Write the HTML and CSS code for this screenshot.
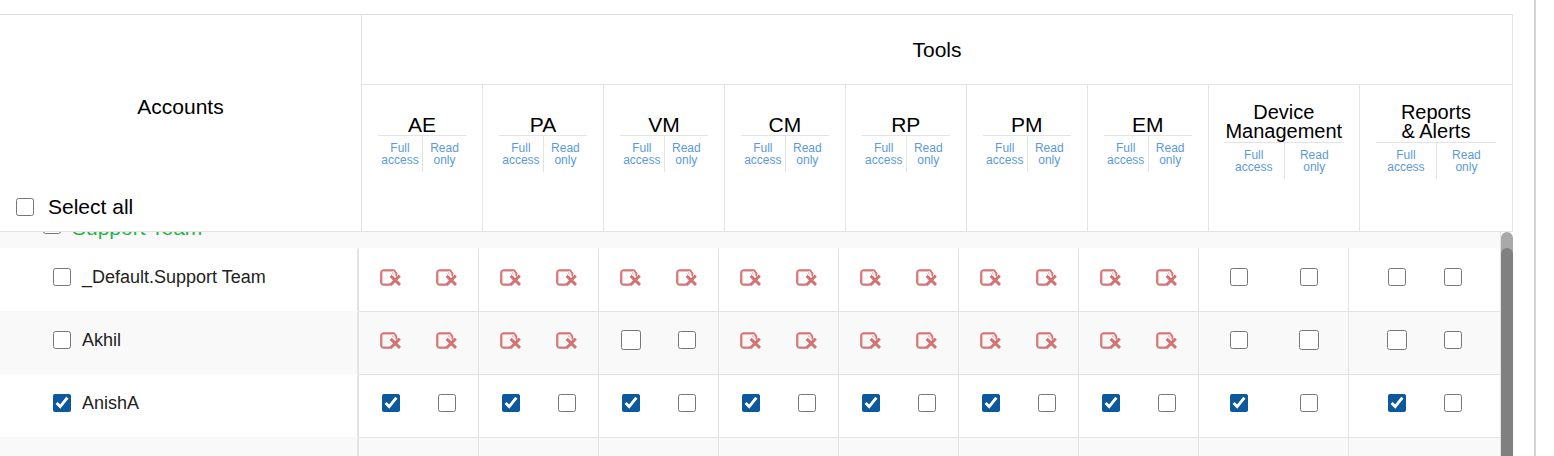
FILE: index.html
```html
<!doctype html>
<html lang="en">
  <head>
    <meta charset="utf-8">
    <title>Account permissions</title>
    <link rel="stylesheet" href="styles.css">
  </head>

  <body>
    <svg class="sprite" aria-hidden="true">
      <symbol id="denied" viewBox="0 0 21 17">
        <path class="deniedFold" d="M2.5 14V4.2Q2.5 2.5 4.2 2.5H12.5V5H15.5M2.5 14.5H10"/>
        <path class="deniedBox" d="M16.4 7.5V4.4L14 1.1H4A3 3 0 0 0 1 4.1v8.8a3 3 0 0 0 3 3H10.5"/>
        <path class="deniedCross" d="M10.6 6.8L20 15.8M19.8 6.6L10.4 16"/>
      </symbol>
    </svg>

    <main id="mainContainer">
      <table class="headTable">
        <colgroup>
          <col class="colAccounts">
          <col class="colTool" span="7">
          <col class="colDevice">
          <col>
        </colgroup>
        <thead>
          <tr class="toolsRow">
            <th class="accountsHead" rowspan="2">
              <div class="accountsTitle">Accounts</div>
              <label class="selectAll"><input type="checkbox"> Select all</label>
            </th>
            <th colspan="9">Tools</th>
          </tr>
          <tr id="toolHeads" class="namesRow"></tr>
        </thead>
      </table>

      <div class="scroller">
        <div class="rows">
          <table class="bodyTable">
            <colgroup>
              <col class="colAccounts">
              <col class="colTool" span="7">
              <col class="colDevice">
              <col>
            </colgroup>
            <tbody id="accountRows">
              <tr class="groupRow">
                <td colspan="10"><label class="account"><input type="checkbox"> Support Team</label></td>
              </tr>
            </tbody>
          </table>
        </div>
        <div class="track"><div class="thumb"></div></div>
      </div>
    </main>

    <script src="script.js"></script>
  </body>
</html>
```

FILE: styles.css
```css
body {
  margin:0;
  background-color:#fff;
  font-family:"Liberation Sans", Arial, sans-serif;
  color:#000;
}

.sprite {
  display:none;
}

#mainContainer {
  display:flex;
  flex-direction:column;
  box-sizing:border-box;
  height:100vh;
  margin-right:18px;
  padding-top:14px;
  padding-right:21px;
  border-right:2px solid #d4d4d4;
}

table {
  width:100%;
  table-layout:fixed;
  border-collapse:separate;
  border-spacing:0;
}

th, td {
  box-sizing:border-box;
  padding:0;
  font-weight:normal;
}

input {
  flex:none;
  width:18px;
  height:18px;
  margin:0;
  accent-color:#0b589f;
}

input.large {
  width:20px;
  height:20px;
}

/* header */

.headTable {
  flex:none;
  border-top:1px solid #ddd;
  border-right:1px solid #e3e3e3;
  font-size:21px;
  line-height:24px;
}

.headTable .colAccounts {
  width:361px;
}

.colTool {
  width:8%;
}

.colDevice {
  width:10%;
}

.headTable th {
  border-bottom:1px solid #e3e3e3;
  border-left:1px solid #e3e3e3;
}

.headTable .accountsHead {
  padding-bottom:12px;
  border-left:0;
  vertical-align:bottom;
}

.toolsRow {
  height:70px;
}

.namesRow {
  height:147px;
}

.headTable .namesRow th {
  padding-bottom:30px;
}

.headTable .namesRow .wide {
  padding-bottom:34px;
}

.selectAll {
  display:flex;
  align-items:center;
  gap:14px;
  margin-top:76px;
  padding-left:16px;
}

.toolName {
  padding-bottom:1px;
  line-height:19px;
}

.wide .toolName {
  font-size:20px;
}

.access {
  display:grid;
  grid-template-columns:1fr 1fr;
  width:88px;
  margin:0 auto;
  border-top:1px solid #e3e3e3;
}

.wide .access {
  width:120px;
}

.access a {
  padding:6px 2px;
  font-size:12px;
  line-height:12px;
  color:#5c9ad9;
  text-decoration:none;
}

.access a + a {
  border-left:1px solid #e3e3e3;
}

/* account rows */

.scroller {
  display:flex;
  flex:1;
  min-height:0;
  overflow:hidden;
}

.rows {
  flex:1;
  border-right:1px solid #e3e3e3;
}

.bodyTable {
  margin-top:-33px;
  font-size:18px;
  line-height:20px;
  color:#222;
}

.bodyTable .colAccounts {
  width:359px;
}

.bodyTable tr {
  height:63px;
}

.bodyTable tr:nth-child(odd) {
  background-color:#f9f9f9;
}

.bodyTable .groupRow {
  height:49px;
  font-size:21px;
  line-height:24px;
  color:#1fb544;
}

.bodyTable td {
  padding-bottom:7px;
  border-top:1px solid #e3e3e3;
  border-right:1px solid #e3e3e3;
}

.bodyTable td:first-child {
  border-top-color:transparent;
  border-right-width:2px;
}

.bodyTable .groupRow td {
  padding-top:8px;
  padding-bottom:0;
  border:0;
}

.bodyTable .groupRow + tr td {
  border-top-color:transparent;
}

.bodyTable td:last-child {
  border-right:0;
}

.account {
  display:flex;
  align-items:center;
  gap:11px;
  padding-left:53px;
}

.groupRow .account {
  align-items:flex-start;
  padding-left:43px;
}

.choices {
  display:grid;
  grid-template-columns:56px 56px;
  justify-content:center;
  align-items:center;
  justify-items:center;
}

.choices.device {
  grid-template-columns:70px 70px;
}

.denied {
  width:21px;
  height:17px;
  margin-top:2px;
}

.deniedBox, .deniedFold, .deniedCross {
  fill:none;
  stroke:#d47373;
}

.deniedBox {
  stroke-width:1.8;
}

.deniedFold {
  stroke:#ecc0c0;
  stroke-width:1;
}

.deniedCross {
  stroke-width:3;
}

.track {
  flex:none;
  width:12px;
  padding-top:16px;
  border-radius:6px 6px 0 0;
  background-color:#a9a9a9;
}

.thumb {
  height:100%;
  border-radius:6px 6px 0 0;
  background-color:#808080;
}
```

FILE: script.js
```js
var tools = ["AE", "PA", "VM", "CM", "RP", "PM", "EM", "Device<br>Management", "Reports<br>&amp; Alerts"];

// two letters per tool, full access then read only
// x = denied, o = unchecked, O = unchecked large, c = checked
var accounts = [
  { name: "_Default.Support Team", access: "xx xx xx xx xx xx xx oo oo" },
  { name: "Akhil", access: "xx xx Oo xx xx xx xx oO Oo" },
  { name: "AnishA", checked: true, access: "co co co co co co co co co" },
  { name: "", access: "" }
];

addToolHeads();
accounts.forEach(addAccount);

function addToolHeads() {
  document.getElementById("toolHeads").innerHTML = tools.map(function(tool, i) {
    return '<th class="' + (i > 6 ? 'wide' : '') + '">' +
      '<div class="toolName">' + tool + '</div>' +
      '<div class="access"><a href="#">Full<br>access</a><a href="#">Read<br>only</a></div></th>';
  }).join("");
}

function addAccount(account) {
  var row = document.createElement("tr"),
    access = account.access.split(" "),
    html = "<td>";

  if(account.name) {
    html += '<label class="account">' + checkbox(account.checked ? "c" : "o", "") + account.name + '</label>';
  }
  html += "</td>";

  tools.forEach(function(tool, i) {
    var name = account.name + " " + tool.replace("<br>", " "),
      pair = access[i] || "";

    html += '<td><div class="choices' + (i == 7 ? ' device' : '') + '">';
    if(pair) {
      html += choice(pair[0], name + " full access") + choice(pair[1], name + " read only");
    }
    html += "</div></td>";
  });

  row.innerHTML = html;
  document.getElementById("accountRows").appendChild(row);
}

function choice(state, label) {
  if(state == "x") {
    return '<svg class="denied" role="img" aria-label="' + label + ' denied"><use href="#denied"/></svg>';
  }
  return checkbox(state, label);
}

function checkbox(state, label) {
  return '<input type="checkbox"' +
    (label ? ' aria-label="' + label + '"' : '') +
    (state == "O" ? ' class="large"' : '') +
    (state == "c" ? ' checked' : '') + '>';
}
```
